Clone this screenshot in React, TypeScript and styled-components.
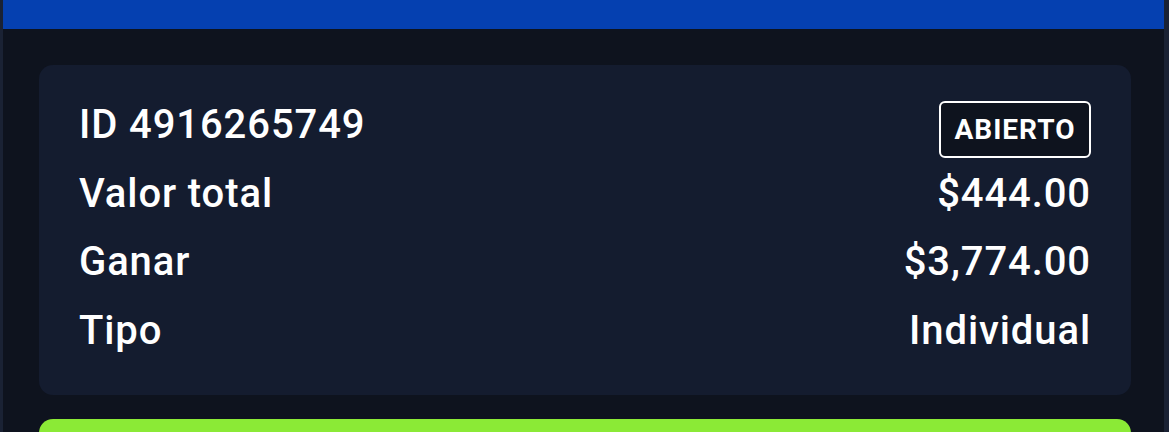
import React from "react";
import styled, { createGlobalStyle } from "styled-components";

const Global = createGlobalStyle`
  html, body { margin: 0; padding: 0; background: #0e131e; }
  body { font-family: Roboto, "Noto Sans", "Liberation Sans", sans-serif; color: #fff; }
  * { box-sizing: border-box; }
`;

const Frame = styled.div`
  width: 1169px;
  height: 432px;
  overflow: hidden;
  background: #0e131e;
  border-left: 3px solid #1a2234;
  border-right: 5px solid #1a2234;
  display: flex;
  flex-direction: column;
`;

const TopBar = styled.div`
  height: 29px;
  flex-shrink: 0;
  background: #0540b0;
`;

const Content = styled.div`
  padding: 36px 33px 0 36px;
  display: flex;
  flex-direction: column;
  gap: 24px;
`;

const Card = styled.div`
  background: #141c2f;
  border-radius: 14px;
  padding: 26px 40px 30px 40px;
  display: flex;
  flex-direction: column;
`;

const Row = styled.div`
  height: 68.5px;
  display: flex;
  align-items: center;
  justify-content: space-between;
  font-size: 40px;
  font-weight: 500;
  letter-spacing: 0.9px;
  line-height: 68px;
  color: #ffffff;
`;

const Label = styled.span``;
const Value = styled.span``;

const Badge = styled.span`
  align-self: flex-start;
  margin-top: 10px;
  height: 57px;
  width: 152px;
  border: 2px solid #ffffff;
  border-radius: 6px;
  background: #0e131e;
  display: flex;
  align-items: center;
  justify-content: center;
  font-size: 28px;
  font-weight: 700;
  letter-spacing: 1px;
  line-height: 1;
  color: #fff;
`;

const ActionButton = styled.div`
  height: 60px;
  background: #8bea36;
  border-radius: 14px;
`;

const rows = [
  { label: "Valor total", value: "$444.00" },
  { label: "Ganar", value: "$3,774.00" },
  { label: "Tipo", value: "Individual" },
];

export default function App() {
  return (
    <>
      <Global />
      <Frame>
        <TopBar />
        <Content>
          <Card>
            <Row>
              <Label>ID 4916265749</Label>
              <Badge>ABIERTO</Badge>
            </Row>
            {rows.map((r) => (
              <Row key={r.label}>
                <Label>{r.label}</Label>
                <Value>{r.value}</Value>
              </Row>
            ))}
          </Card>
          <ActionButton />
        </Content>
      </Frame>
    </>
  );
}
